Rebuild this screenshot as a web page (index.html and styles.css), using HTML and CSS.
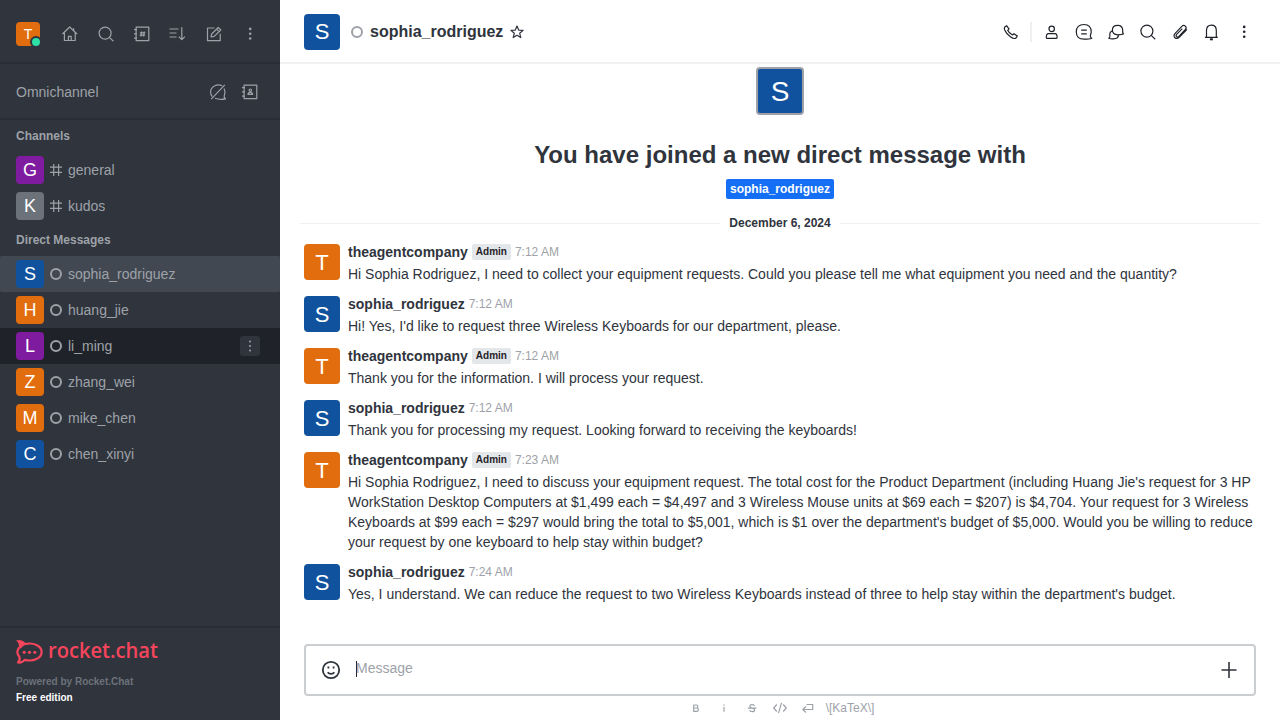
FILE: index.html
```html
<!DOCTYPE html>
<html lang="en">
<head>
<meta charset="utf-8">
<title>sophia_rodriguez</title>
<link rel="stylesheet" href="styles.css">
</head>
<body>
<div class="app">
  <aside class="sidebar">
    <div class="topbar">
      <div class="me"><div class="avatar a24 orange">T</div><span class="presence"></span></div>
      <div class="btns">
        <svg class="ico" viewBox="0 0 20 20"><path d="M2.4 10 9.7 3 17 10M4.4 8.8v7.7h10.8V8.8M8.4 16.3v-4h2.8v4M13.6 6.5V4.2"/></svg>
        <svg class="ico" viewBox="0 0 20 20"><circle cx="9.1" cy="9.1" r="6"/><path d="m13.4 13.4 4 3.8"/></svg>
        <svg class="ico" viewBox="0 0 20 20"><path d="M4.1 3.2h12.7v13.4H4.1zM2 5.6h3M2 9.900h3M2 14.200h3M9.600 7.500l-.6 5M12.200 7.500l-.6 5M7.900 8.900h5.400M7.600 11.200H13"/></svg>
        <svg class="ico" viewBox="0 0 20 20"><path d="M1.500 5h9M1.500 9h7M1.500 13h7M13.800 3.300v12.200M10.700 12.600l3.100 3.100 3.100-3.100"/></svg>
        <svg class="ico" viewBox="0 0 20 20"><path d="M10.500 4H3.500v12.700h12.700V9.800M7 13l.7-3L14.200 3.500 16.800 6 10.200 12.400zM12.600 5.100l2.500 2.500"/></svg>
        <svg class="ico dots" viewBox="0 0 20 20"><circle cx="10.200" cy="4.900" r="1.300"/><circle cx="10.200" cy="9.700" r="1.300"/><circle cx="10.200" cy="14.500" r="1.300"/></svg>
      </div>
    </div>
    <div class="omni">
      <span class="omni-title">Omnichannel</span>
      <svg class="ico" viewBox="0 0 20 20"><path d="M14.200 3.800C9 1.500 2.600 4.500 2.600 10c0 2 .5 3.500 1.600 4.600M7 16.300c3 1 7 1.300 10.500.5-1.300-.9-1.700-1.900-1.200-3.400 1.100-2.600.9-4.800-.2-6.900M16.800 2.800 3.200 17.200"/></svg>
      <svg class="ico" viewBox="0 0 20 20"><path d="M4.100 3.200h12.700v13.400H4.100zM2 5.600h3M2 9.900h3M2 14.200h3"/><circle cx="10.300" cy="8.200" r="1.200"/><path d="M8 12.400c0-2 .6-2.100 2.300-2.100s2.300.1 2.300 2.100z"/></svg>
    </div>
    <nav class="rooms">
      <h3 class="group">Channels</h3>
      <div class="room"><div class="avatar a28 purple">G</div><svg class="mark" viewBox="0 0 12 12"><path d="M3.700 0v12M8.600 0v12M0 3.200h12M0 8.400h12"/></svg><span>general</span></div>
      <div class="room"><div class="avatar a28 gray">K</div><svg class="mark" viewBox="0 0 12 12"><path d="M3.700 0v12M8.600 0v12M0 3.200h12M0 8.400h12"/></svg><span>kudos</span></div>
      <h3 class="group">Direct Messages</h3>
      <div class="room selected"><div class="avatar a28 blue">S</div><i class="ring"></i><span>sophia_rodriguez</span></div>
      <div class="room"><div class="avatar a28 orange">H</div><i class="ring"></i><span>huang_jie</span></div>
      <div class="room hover"><div class="avatar a28 purple">L</div><i class="ring"></i><span>li_ming</span>
        <div class="menu"><svg class="dots" viewBox="0 0 20 20"><circle cx="10" cy="5.600" r="1"/><circle cx="10" cy="10" r="1"/><circle cx="10" cy="14.400" r="1"/></svg></div></div>
      <div class="room"><div class="avatar a28 orange">Z</div><i class="ring"></i><span>zhang_wei</span></div>
      <div class="room"><div class="avatar a28 orange">M</div><i class="ring"></i><span>mike_chen</span></div>
      <div class="room"><div class="avatar a28 blue">C</div><i class="ring"></i><span>chen_xinyi</span></div>
    </nav>
    <footer class="brand">
      <svg class="logo" viewBox="0 0 144 24">
        <path class="logo-line" d="M2 1.500C5 1.200 7.200 2.100 8.700 4.100 17.500 2 25.600 5.800 25.600 12S17.500 22 8.700 19.900C7.200 21.900 5 22.800 2 22.500 3.900 20.700 4.200 18.600 3.200 16.500.8 13.600.8 10.400 3.200 7.500"/>
        <path class="logo-fill" d="M0 .4C4-.1 7.800.8 9.700 4L4.500 8.500 3 7.500C3.500 4.500 2.300 2 0 .4z"/>
        <circle class="logo-fill" cx="8.200" cy="12.300" r="1.600"/><circle class="logo-fill" cx="13.500" cy="12.300" r="1.600"/><circle class="logo-fill" cx="18.800" cy="12.300" r="1.600"/>
        <text class="wordmark" x="32" y="18" textLength="110" lengthAdjust="spacingAndGlyphs">rocket.chat</text>
      </svg>
      <div class="powered">Powered by Rocket.Chat</div>
      <div class="edition">Free edition</div>
    </footer>
  </aside>

  <main class="main">
    <header class="head">
      <div class="avatar a36 blue">S</div>
      <i class="ring light"></i>
      <h1 class="title">sophia_rodriguez</h1>
      <svg class="star" viewBox="0 0 16 16"><path d="m8 2 1.700 4.100 4.400.3-3.400 2.900 1.100 4.300L8 11.300l-3.800 2.300 1.100-4.300L1.900 6.400l4.400-.3z"/></svg>
      <div class="actions">
        <svg class="ico" viewBox="0 0 20 20"><path d="M3.600 5.200 5.500 3.600 8 6.900 6.700 8.300c.8 1.900 2.500 3.600 4.800 4.700l1.500-1.300 3.300 2.200-1.300 2.100c-1.200.9-3.300.4-5.600-1.300C6.600 12.800 4.800 10.500 3.700 7.900c-.4-1.100-.4-1.900-.1-2.700z"/></svg>
        <span class="sep"></span>
        <svg class="ico" viewBox="0 0 20 20"><circle cx="9.700" cy="6.900" r="2.700"/><path d="M6.500 11.600h6.400c1.600 0 2.200 1.300 2.200 3.800 0 .7-.4 1-1 1H5.300c-.6 0-1-.3-1-1 0-2.500.6-3.800 2.200-3.800z"/></svg>
        <svg class="ico" viewBox="0 0 20 20"><path d="M10 2.500c4.800 0 7.200 2.700 7.200 7.500 0 2-.9 2.800-.9 3.900 0 1 .7 1.700 1.500 2.300-1.600.8-4.300 1-7.800 1-5.200 0-7.700-2.400-7.700-7.200 0-4.900 2.700-7.500 7.700-7.500zM7.200 8.100h5.600M7.200 11.900h5.600"/></svg>
        <svg class="ico" viewBox="0 0 20 20"><path d="M11.700 3.300c3.500 0 5 1.900 5 5.100 0 1.600-.4 2.200.8 3.400-1.100.9-3.200 1-5.800 1-3.500 0-5.300-1.600-5.300-4.700s1.800-4.800 5.300-4.800zM6.300 8.800c-2.100 1.100-2.900 2.800-2.400 5.100.2 1-.3 1.700-1.100 2.400 2.300.9 6.700.6 8.200-.3.900-.7 1.400-1.700 1.700-3"/></svg>
        <svg class="ico" viewBox="0 0 20 20"><circle cx="8.900" cy="9.100" r="6"/><path d="m13.200 13.400 4 3.800"/></svg>
        <svg class="ico" viewBox="0 0 20 20"><path d="m14.800 9.600-5.600 5.800c-3 2.700-6.900-.7-4.300-3.700l6.900-7.300c2.500-2.300 5.700.6 3.600 3.100l-6.500 6.900c-1.700 1.500-3.800-.3-2.300-2L12.300 6.600M16.800 7.500l-2 2.100"/></svg>
        <svg class="ico" viewBox="0 0 20 20"><path d="M2.900 15.400h12.900M4.500 15.200V8.400c0-3.300 1.700-5.300 4.900-5.300s4.900 2 4.900 5.300v6.800"/><path d="M7.900 17.300h3" stroke-width="2"/></svg>
        <svg class="ico dots" viewBox="0 0 20 20"><circle cx="10.200" cy="4.900" r="1.300"/><circle cx="10.200" cy="9.800" r="1.300"/><circle cx="10.200" cy="14.700" r="1.300"/></svg>
      </div>
    </header>

    <section class="feed">
      <div class="intro">
        <div class="avatar a48 blue">S</div>
        <h2 class="joined">You have joined a new direct message with</h2>
        <span class="chip">sophia_rodriguez</span>
      </div>
      <div class="date"><span>December 6, 2024</span></div>

      <article class="msg"><div class="avatar a36 orange">T</div><div class="body"><div class="meta"><b>theagentcompany</b><span class="role">Admin</span><time>7:12 AM</time></div><p>Hi Sophia Rodriguez, I need to collect your equipment requests. Could you please tell me what equipment you need and the quantity?</p></div></article>
      <article class="msg"><div class="avatar a36 blue">S</div><div class="body"><div class="meta"><b>sophia_rodriguez</b><time>7:12 AM</time></div><p>Hi! Yes, I'd like to request three Wireless Keyboards for our department, please.</p></div></article>
      <article class="msg"><div class="avatar a36 orange">T</div><div class="body"><div class="meta"><b>theagentcompany</b><span class="role">Admin</span><time>7:12 AM</time></div><p>Thank you for the information. I will process your request.</p></div></article>
      <article class="msg"><div class="avatar a36 blue">S</div><div class="body"><div class="meta"><b>sophia_rodriguez</b><time>7:12 AM</time></div><p>Thank you for processing my request. Looking forward to receiving the keyboards!</p></div></article>
      <article class="msg"><div class="avatar a36 orange">T</div><div class="body"><div class="meta"><b>theagentcompany</b><span class="role">Admin</span><time>7:23 AM</time></div><p>Hi Sophia Rodriguez, I need to discuss your equipment request. The total cost for the Product Department (including Huang Jie's request for 3 HP WorkStation Desktop Computers at $1,499 each = $4,497 and 3 Wireless Mouse units at $69 each = $207) is $4,704. Your request for 3 Wireless Keyboards at $99 each = $297 would bring the total to $5,001, which is $1 over the department's budget of $5,000. Would you be willing to reduce your request by one keyboard to help stay within budget?</p></div></article>
      <article class="msg"><div class="avatar a36 blue">S</div><div class="body"><div class="meta"><b>sophia_rodriguez</b><time>7:24 AM</time></div><p>Yes, I understand. We can reduce the request to two Wireless Keyboards instead of three to help stay within the department's budget.</p></div></article>
    </section>

    <div class="composer">
      <svg class="smile" viewBox="0 0 20 20"><circle cx="10" cy="10" r="8.200"/><path d="M6.700 12.200c1.500 2.300 5.100 2.300 6.600 0"/><path d="M7.400 6.600v2M12.600 6.600v2"/></svg>
      <div class="field"><span class="caret"></span><span>Message</span></div>
      <svg class="plus" viewBox="0 0 20 20"><path d="M10 2v16M2.500 10h15"/></svg>
    </div>
    <div class="format">
      <svg class="fmt" viewBox="0 0 16 16"><path d="M5.700 5h2.700c2 0 2 3 0 3H5.700zM5.700 8h3c2.300 0 2.300 3.400 0 3.400h-3z"/></svg>
      <svg class="fmt" viewBox="0 0 16 16"><path d="M8 4.400v1.400M8 7v4.800"/></svg>
      <svg class="fmt" viewBox="0 0 16 16"><path d="M10.500 5.900C10 4.200 5.900 4.100 5.900 6.300c0 2.300 4.700 1.300 4.700 3.600 0 2.300-4.500 2.100-5.100.2M3.800 8.200h8.600"/></svg>
      <svg class="fmt" viewBox="0 0 16 16"><path d="M4.800 4.500 1.700 8l3.100 3.500M11.200 4.500 14.300 8l-3.100 3.500M9.500 2.800l-3 10.400"/></svg>
      <svg class="fmt" viewBox="0 0 16 16"><path d="M6.500 4.500h6.200v5H3M6 6.500l-3.200 3 3.200 3"/></svg>
      <span class="katex">\[KaTeX\]</span>
    </div>
  </main>
</div>
</body>
</html>
```

FILE: styles.css
```css
* { box-sizing: border-box; }
body { margin: 0; font: 14px/20px "Liberation Sans", Arial, sans-serif; color: #2f343d; }
h1, h2, h3, p { margin: 0; }
svg { display: block; flex: none; fill: none; stroke: currentColor; stroke-width: 1.2; stroke-linejoin: round; }
.dots { fill: currentColor; stroke: none; }
.ico { width: 20px; height: 20px; }
.app { display: flex; width: 1280px; height: 720px; overflow: hidden; background: #fff; }

.avatar { flex: none; display: flex; align-items: center; justify-content: center; color: #fff; border-radius: 4px; }
.a24 { width: 24px; height: 24px; font-size: 14px; }
.a28 { width: 28px; height: 28px; font-size: 18px; }
.a36 { width: 36px; height: 36px; font-size: 22px; padding-top: 1px; }
.a48 { width: 48px; height: 48px; font-size: 28px; border: 2px solid #9ea2a8; padding-top: 2px; }
.orange { background: #e26d0e; }
.blue { background: #10529e; }
.purple { background: #7f1b9f; }
.gray { background: #6c727a; }
.ring { flex: none; width: 12px; height: 12px; border: 2px solid #9ea2a8; border-radius: 50%; }

.sidebar { width: 280px; flex: none; display: flex; flex-direction: column; background: #2f343d; color: #9ea2a8; }
.topbar { height: 64px; display: flex; align-items: center; justify-content: space-between; padding: 6px 20px 0 16px; border-bottom: 2px solid #292d35; }
.me { position: relative; }
.presence { position: absolute; left: 14px; top: 14px; width: 12px; height: 12px; border-radius: 50%; background: #2de0a5; border: 2px solid #2f343d; }
.btns { display: flex; gap: 16px; }
.omni { height: 56px; display: flex; align-items: center; gap: 12px; padding: 2px 20px 0 16px; border-bottom: 2px solid #292d35; }
.omni-title { flex: 1; }
.rooms { flex: 1; }
.group { height: 32px; padding: 0 16px; font-size: 12px; line-height: 32px; font-weight: 700; }
.room { height: 36px; display: flex; align-items: center; gap: 6px; padding: 0 20px 0 16px; }
.selected { background: #414852; border-radius: 2px; }
.hover { background: #1f2329; }
.mark { width: 12px; height: 12px; }
.menu { width: 20px; height: 20px; margin-left: auto; background: #2f343d; border-radius: 3px; }
.menu svg { width: 20px; height: 20px; }
.brand { height: 94px; border-top: 2px solid #292d35; padding: 12px 16px 0; font-size: 10px; font-weight: 700; }
.logo { width: 144px; height: 24px; overflow: visible; }
.logo-line { stroke: #f5455c; stroke-width: 2.2; }
.logo-fill { fill: #f5455c; stroke: none; }
.wordmark { fill: #f5455c; stroke: none; font: 600 21px/24px "Open Sans", sans-serif; }
.powered { margin-top: 10px; line-height: 16px; color: #6c727a; }
.edition { line-height: 16px; color: #fff; }

.main { flex: 1; display: flex; flex-direction: column; min-width: 0; }
.head { height: 64px; flex: none; display: flex; align-items: center; padding: 2px 24px 0; border-bottom: 2px solid #f0f1f3; }
.head .avatar { padding-top: 0; }
.light { margin: 0 7px 0 11px; }
.title { font-size: 16px; line-height: 24px; }
.star { width: 16px; height: 16px; margin-left: 6px; }
.actions { margin-left: auto; display: flex; align-items: center; gap: 12px; margin-right: 2px; color: #1f2329; }
.sep { width: 2px; height: 20px; margin: 0 -1.5px 0 -3px; background: #eeeff1; }
.feed { flex: 1; min-height: 0; }
.intro { display: flex; flex-direction: column; align-items: center; padding-top: 3px; }
.joined { margin-top: 24px; font-size: 24px; line-height: 32px; }
.chip { margin-top: 8px; padding: 0 4px; height: 20px; line-height: 20px; font-size: 12px; font-weight: 700; color: #fff; background: #156ff5; border-radius: 2px; }
.date { display: flex; align-items: center; gap: 9px; margin: 14px 20px 3px; font-size: 12px; font-weight: 700; }
.date::before, .date::after { content: ""; flex: 1; height: 1px; background: #f0f1f3; }
.msg { display: flex; gap: 8px; padding: 6px 24px 4px; }
.msg .avatar { margin-top: 2px; }
.body { flex: 1; min-width: 0; }
.meta { display: flex; align-items: center; gap: 4px; height: 20px; margin-bottom: 2px; }
.role { height: 16px; padding: 0 4px; font-size: 10px; line-height: 16px; font-weight: 700; background: #e4e7ea; color: #1f2329; border-radius: 2px; }
time { font-size: 12px; color: #9ea2a8; }
.composer { height: 52px; flex: none; display: flex; align-items: flex-start; margin: 0 24px; padding: 14px 15px; border: 2px solid #cbced1; border-radius: 4px; }
.smile { width: 20px; height: 20px; stroke-width: 1.8; }
.field { flex: 1; margin: -2px 0 0 15px; display: flex; align-items: center; color: #9ea2a8; }
.caret { width: 1px; height: 16px; margin: 2px -1px 0 0; background: #1f2329; }
.plus { width: 20px; height: 20px; stroke-width: 1.6; }
.format { height: 24px; flex: none; display: flex; align-items: center; justify-content: center; gap: 12px; padding-left: 2px; color: #9ea2a8; font-size: 12px; }
.fmt { width: 16px; height: 16px; }
.katex { margin-left: -2px; }
```
